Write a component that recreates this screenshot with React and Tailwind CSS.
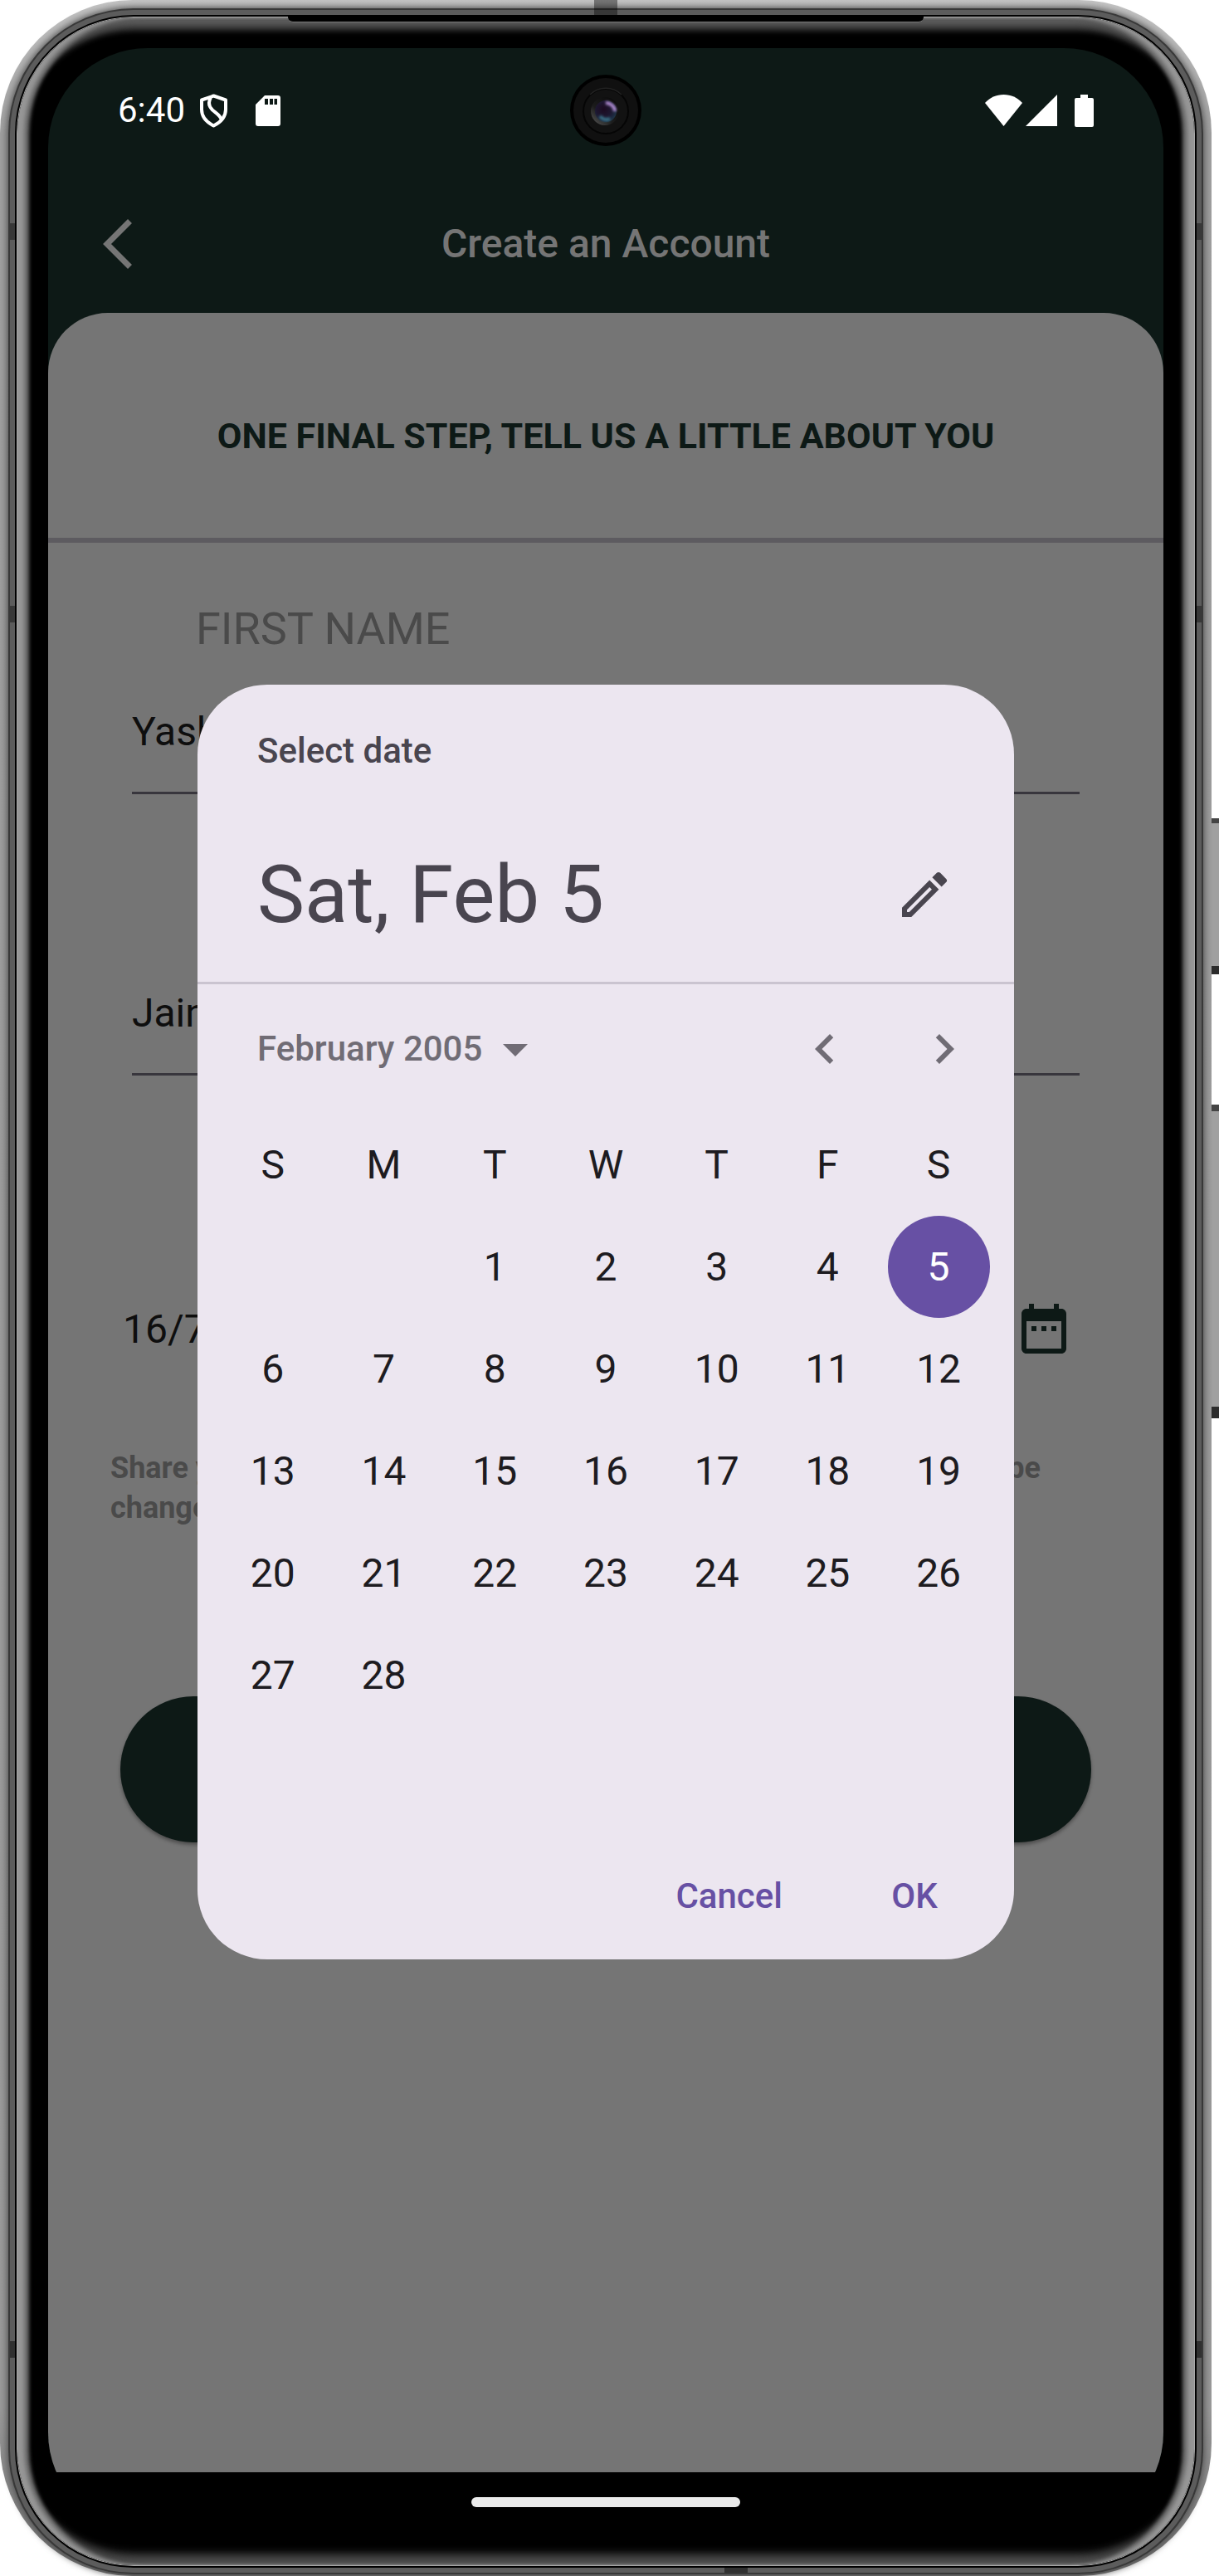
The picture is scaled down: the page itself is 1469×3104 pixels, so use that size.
import React, { useState } from "react";

const WEEKDAYS = ["S", "M", "T", "W", "T", "F", "S"];
const WEEKDAY_NAMES = ["Sunday", "Monday", "Tuesday", "Wednesday", "Thursday", "Friday", "Saturday"];
const WEEKS = [
  [null, null, 1, 2, 3, 4, 5],
  [6, 7, 8, 9, 10, 11, 12],
  [13, 14, 15, 16, 17, 18, 19],
  [20, 21, 22, 23, 24, 25, 26],
  [27, 28, null, null, null, null, null],
  [null, null, null, null, null, null, null],
];

function Icon({ d, className }) {
  return (
    <svg viewBox="0 0 24 24" fill="currentColor" aria-hidden="true" className={className}>
      <path d={d} />
    </svg>
  );
}

const ICONS = {
  edit: "M14.06 9.02l.92.92L5.92 19H5v-.92l9.06-9.06M17.66 3c-.25 0-.51.1-.7.29l-1.83 1.83 3.75 3.75 1.83-1.83a.996.996 0 0 0 0-1.41l-2.34-2.34c-.2-.2-.45-.29-.71-.29zm-3.6 3.19L3 17.25V21h3.75L17.81 9.94l-3.75-3.75z",
  drop: "M7 10l5 5 5-5z",
  left: "M15.41 16.59L10.83 12l4.58-4.59L14 6l-6 6 6 6z",
  right: "M8.59 16.59L13.17 12 8.59 7.41 10 6l6 6-6 6z",
  date: "M9 11H7v2h2v-2zm4 0h-2v2h2v-2zm4 0h-2v2h2v-2zm2-7h-1V2h-2v2H8V2H6v2H5c-1.11 0-1.99.9-1.99 2L3 20c0 1.1.89 2 2 2h14c1.1 0 2-.9 2-2V6c0-1.1-.9-2-2-2zm0 16H5V9h14v11z",
};

function Camera() {
  return (
    <svg viewBox="0 0 86 86" aria-hidden="true" className="size-[86px]">
      <defs>
        <radialGradient id="lens" cx="0.4" cy="0.4" r="0.65">
          <stop offset="0" stopColor="#1c0a20" />
          <stop offset="0.55" stopColor="#1d1730" />
          <stop offset="1" stopColor="#1d3448" />
        </radialGradient>
        <linearGradient id="rim" x1="0.1" y1="0.9" x2="0.8" y2="0.1">
          <stop offset="0" stopColor="#4c4c4c" />
          <stop offset="0.4" stopColor="#1c1c1c" />
          <stop offset="1" stopColor="#0c0c0c" />
        </linearGradient>
        <filter id="glow" x="-1" y="-1" width="3" height="3">
          <feGaussianBlur stdDeviation="1.6" />
        </filter>
      </defs>
      <circle cx="43" cy="43" r="43" fill="#000" />
      <circle cx="43" cy="43" r="39" fill="#101010" />
      <circle cx="43" cy="44" r="27" fill="#121212" stroke="#050505" strokeWidth="2" />
      <path d="M24 24a27 27 0 0 1 38 0" fill="none" stroke="#222" strokeWidth="1.5" />
      <circle cx="42" cy="44" r="17" fill="url(#rim)" />
      <circle cx="43" cy="44" r="13" fill="url(#lens)" />
      <path d="M43 34c5 0 11 4 11 10" fill="none" stroke="#b08ad0" strokeWidth="4" filter="url(#glow)" />
      <path d="M36 50c3 4 8 5 12 3" fill="none" stroke="#3a7288" strokeWidth="4" filter="url(#glow)" />
    </svg>
  );
}

function StatusBar() {
  return (
    <div className="relative flex h-[150px] shrink-0 items-center justify-between pl-[84px] pr-[84px] text-white">
      <div className="flex items-center">
        <span className="text-[42px] leading-[48px]">6:40</span>
        <svg viewBox="0 0 33 41" fill="none" stroke="currentColor" strokeWidth="4" strokeLinejoin="round" aria-hidden="true" className="ml-[18px] h-[41px] w-[33px]">
          <path d="M16.5 2.5L31 7.5V19c0 8.500-5.500 15-14.500 19.500C7.500 34 2 27.500 2 19V7.500z" />
          <path d="M13 4.500c-3 5-3 10 2 15 6 5 10 7 11 12" />
        </svg>
        <svg viewBox="0 0 30 37" aria-hidden="true" className="ml-[34px] h-[37px] w-[30px]">
          <path fill="currentColor" fillRule="evenodd" d="M11 0h16a3 3 0 0 1 3 3v31a3 3 0 0 1-3 3H3a3 3 0 0 1-3-3V11zM11 4v7h4V4zM17 4v7h4V4zM22.500 4v7h3.500V4z" />
        </svg>
      </div>
      <div className="absolute left-1/2 top-8 -translate-x-1/2">
        <Camera />
      </div>
      <div className="flex items-center">
        <svg viewBox="0 0 45 38" fill="currentColor" aria-hidden="true" className="h-[38px] w-[45px]">
          <path d="M22.500 38L0 10C6 3.500 13.500 0 22.500 0S39 3.500 45 10z" />
        </svg>
        <svg viewBox="0 0 38 38" fill="currentColor" aria-hidden="true" className="ml-1 size-[38px]">
          <path d="M38 0v38H0z" />
        </svg>
        <svg viewBox="0 0 23 39" fill="currentColor" aria-hidden="true" className="ml-[21px] h-[39px] w-[23px]">
          <path d="M7 0h9v4h5a2 2 0 0 1 2 2v31a2 2 0 0 1-2 2H2a2 2 0 0 1-2-2V6a2 2 0 0 1 2-2h5z" />
        </svg>
      </div>
    </div>
  );
}

function UnderlinedInput({ id, value, label }) {
  return (
    <input
      id={id}
      type="text"
      aria-label={label}
      defaultValue={value}
      className="h-[152px] w-full border-b-[3px] border-[#38363d] bg-transparent pt-[3px] text-[48px] text-[#0e0e0e] outline-none"
    />
  );
}

function DateDialog() {
  const [selected, setSelected] = useState(5);
  return (
    <div
      role="dialog"
      aria-label="Select date"
      className="flex w-[984px] max-w-full flex-col overflow-hidden rounded-[84px] bg-[#ece6f0] text-[#49454f]"
    >
      <p className="pl-[72px] pt-14 text-[42px] font-medium leading-[48px]">Select date</p>
      <div className="mt-[77px] flex h-[144px] items-center justify-between pl-[72px] pr-9">
        <h2 className="text-[96px] leading-[120px]">Sat, Feb 5</h2>
        <button type="button" aria-label="Switch to text input" className="flex size-[144px] items-center justify-center">
          <Icon d={ICONS.edit} className="size-[72px]" />
        </button>
      </div>
      <hr className="mt-[33px] border-0 border-t-[3px] border-[#cac4d0]" />
      <div className="flex h-[156px] items-center justify-between pl-[72px] pr-3 text-[#706c75]">
        <button type="button" className="flex items-center text-[42px] font-medium leading-[60px]">
          February 2005
          <Icon d={ICONS.drop} className="ml-1 size-[72px]" />
        </button>
        <div className="flex">
          <button type="button" aria-label="Previous month" className="flex size-[144px] items-center justify-center">
            <Icon d={ICONS.left} className="size-[72px]" />
          </button>
          <button type="button" aria-label="Next month" className="flex size-[144px] items-center justify-center">
            <Icon d={ICONS.right} className="size-[72px]" />
          </button>
        </div>
      </div>
      <div className="px-6">
        <table className="w-full table-fixed border-collapse text-[48px] leading-[60px] text-[#1d1b20]">
          <thead>
            <tr className="h-[123px]">
              {WEEKDAYS.map((d, i) => (
                <th key={i} scope="col" abbr={WEEKDAY_NAMES[i]} className="p-0 text-center font-normal">
                  {d}
                </th>
              ))}
            </tr>
          </thead>
          <tbody>
            {WEEKS.map((week, w) => (
              <tr key={w} className="h-[123px]">
                {week.map((day, i) => (
                  <td key={i} className="p-0">
                    {day && (
                      <button
                        type="button"
                        aria-pressed={day === selected}
                        onClick={() => setSelected(day)}
                        className={
                          day === selected
                            ? "mx-auto flex size-[123px] items-center justify-center rounded-full bg-[#6750a4] text-white"
                            : "mx-auto flex size-[123px] items-center justify-center rounded-full"
                        }
                      >
                        {day}
                      </button>
                    )}
                  </td>
                ))}
              </tr>
            ))}
          </tbody>
        </table>
      </div>
      <div className="mb-[17px] mt-[21px] flex justify-end gap-9 pr-[33px] text-[42px] font-medium text-[#6750a4]">
        <button type="button" className="h-[120px] px-9">Cancel</button>
        <button type="button" className="h-[120px] w-[174px]">OK</button>
      </div>
    </div>
  );
}

function Screen() {
  return (
    <div className="relative flex flex-1 flex-col overflow-hidden rounded-[120px] bg-black">
      <div className="flex flex-1 flex-col bg-[#0d1916]">
        <StatusBar />
        <header className="relative flex h-[169px] shrink-0 items-center justify-center pt-[3px]">
          <button type="button" aria-label="Back" className="absolute left-[66px] text-[#757575]">
            <svg viewBox="0 0 35 60" fill="none" stroke="currentColor" strokeWidth="7" aria-hidden="true" className="h-[60px] w-[35px]">
              <path d="M32.5 2.5L5 30l27.500 27.500" />
            </svg>
          </button>
          <h1 className="text-[48px] font-medium leading-[60px] text-[#757575]">Create an Account</h1>
        </header>
        <main className="flex flex-1 flex-col rounded-t-[72px] bg-[#757575]">
          <div className="flex h-[271px] items-center justify-center pt-6">
            <p className="text-[43px] font-bold leading-[48px] text-[#0d1916]">
              ONE FINAL STEP, TELL US A LITTLE ABOUT YOU
            </p>
          </div>
          <hr className="border-0 border-t-[6px] border-[#5d5b60]" />
          <form className="flex flex-col pt-[74px]" onSubmit={(e) => e.preventDefault()}>
            <div className="flex flex-col px-[101px]">
              <label htmlFor="first-name" className="mb-[17px] pl-[77px] text-[54px] leading-[60px] text-[#4a4a4a]">
                FIRST NAME
              </label>
              <UnderlinedInput id="first-name" value="Yash" />
              <div className="mt-[187px]">
                <UnderlinedInput id="last-name" label="Last name" value="Jain" />
              </div>
            </div>
            <div className="mt-[245px] flex h-[120px] items-center pl-[90px] pr-[108px]">
              <input
                type="text"
                aria-label="Date of birth"
                defaultValue="16/7"
                className="h-[120px] min-w-0 flex-1 bg-transparent text-[48px] text-[#0e0e0e] outline-none"
              />
              <button type="button" aria-label="Pick a date" className="text-[#0d1916]">
                <Icon d={ICONS.date} className="size-[72px]" />
              </button>
            </div>
            <p className="mt-[84px] pl-[75px] pr-[148px] text-[36px] font-bold leading-[48px] text-[#4a4a4a]">
              <span className="flex justify-between">
                <span>Share your</span>
                <span>be</span>
              </span>
              <span className="block">changed</span>
            </p>
            <button
              type="submit"
              aria-label="Continue"
              className="mx-[87px] mt-[203px] h-[176px] rounded-full bg-[#0d1916] shadow-[0_3px_4px_rgba(0,0,0,0.35)]"
            />
          </form>
        </main>
      </div>
      <div className="flex h-[72px] shrink-0 items-center justify-center">
        <div className="h-3 w-[324px] rounded-full bg-[#ebebeb]" />
      </div>
      <div className="absolute inset-0 flex items-start justify-center pt-[767px]">
        <DateDialog />
      </div>
    </div>
  );
}

function PhoneFrame({ children }) {
  return (
    <div className="relative flex min-h-screen w-full bg-white pr-[9px]">
      <div className="absolute right-0 top-[986px] h-[188px] w-[10px] border-b-[10px] border-t-[6px] border-b-[#2c2c2c] border-t-[#444] bg-[#a0a0a0]" />
      <div className="absolute right-0 top-[1331px] h-[378px] w-[10px] border-b-[14px] border-t-[8px] border-b-[#2c2c2c] border-t-[#444] bg-[#a0a0a0]" />
      <div className="relative flex flex-1 flex-col rounded-[160px] bg-[linear-gradient(to_bottom,#c4c4c4_0px,#a0a0a0_160px,#9a9a9a_2900px,#707070_100%)] px-[10px] pb-[2px] pt-[10px]">
        <div className="flex flex-1 flex-col rounded-[151px] bg-[#383838] p-[2px] shadow-[0_0_8px_1px_#4a4a4a]">
          <div className="relative flex flex-1 flex-col rounded-[149px] bg-[#5c5c5c] p-[6px]">
            <div className="absolute left-0 top-[257px] h-5 w-[6px] bg-[#383838]" />
            <div className="absolute right-0 top-[257px] h-5 w-[6px] bg-[#383838]" />
            <div className="absolute left-0 top-[718px] h-5 w-[6px] bg-[#383838]" />
            <div className="absolute right-0 top-[718px] h-5 w-[6px] bg-[#383838]" />
            <div className="absolute bottom-[259px] left-0 h-5 w-[6px] bg-[#303030]" />
            <div className="absolute bottom-[259px] right-0 h-5 w-[6px] bg-[#303030]" />
            <div className="absolute left-1/2 top-[-12px] h-[18px] w-7 -translate-x-1/2 bg-black/40" />
            <div className="absolute bottom-0 left-[861px] h-[6px] w-7 bg-[#303030]" />
            <div className="flex flex-1 flex-col rounded-[143px] bg-black p-[2px]">
              <div className="flex flex-1 flex-col rounded-[141px] bg-[#a8a8a8] p-px">
                <div className="relative flex flex-1 flex-col rounded-[140px] bg-black px-[37px] pb-10 pt-[37px] shadow-[inset_9px_0_4px_-1px_#969696,inset_-9px_0_4px_-1px_#969696,inset_15px_0_4px_-1px_#6c6c6c,inset_-15px_0_4px_-1px_#6c6c6c,inset_0_9px_6px_#5c5c5c,inset_0_16px_6px_#3a3a3a,inset_0_-9px_8px_#505050,inset_0_-16px_8px_#2a2a2a]">
                  <div className="absolute left-[326px] right-[326px] top-[-1px] h-[7px] rounded-b-md border-b border-[#777] bg-black" />
                  {children}
                </div>
              </div>
            </div>
          </div>
        </div>
      </div>
    </div>
  );
}

export default function App() {
  return (
    <div className="font-[Roboto,sans-serif]">
      <PhoneFrame>
        <Screen />
      </PhoneFrame>
    </div>
  );
}
